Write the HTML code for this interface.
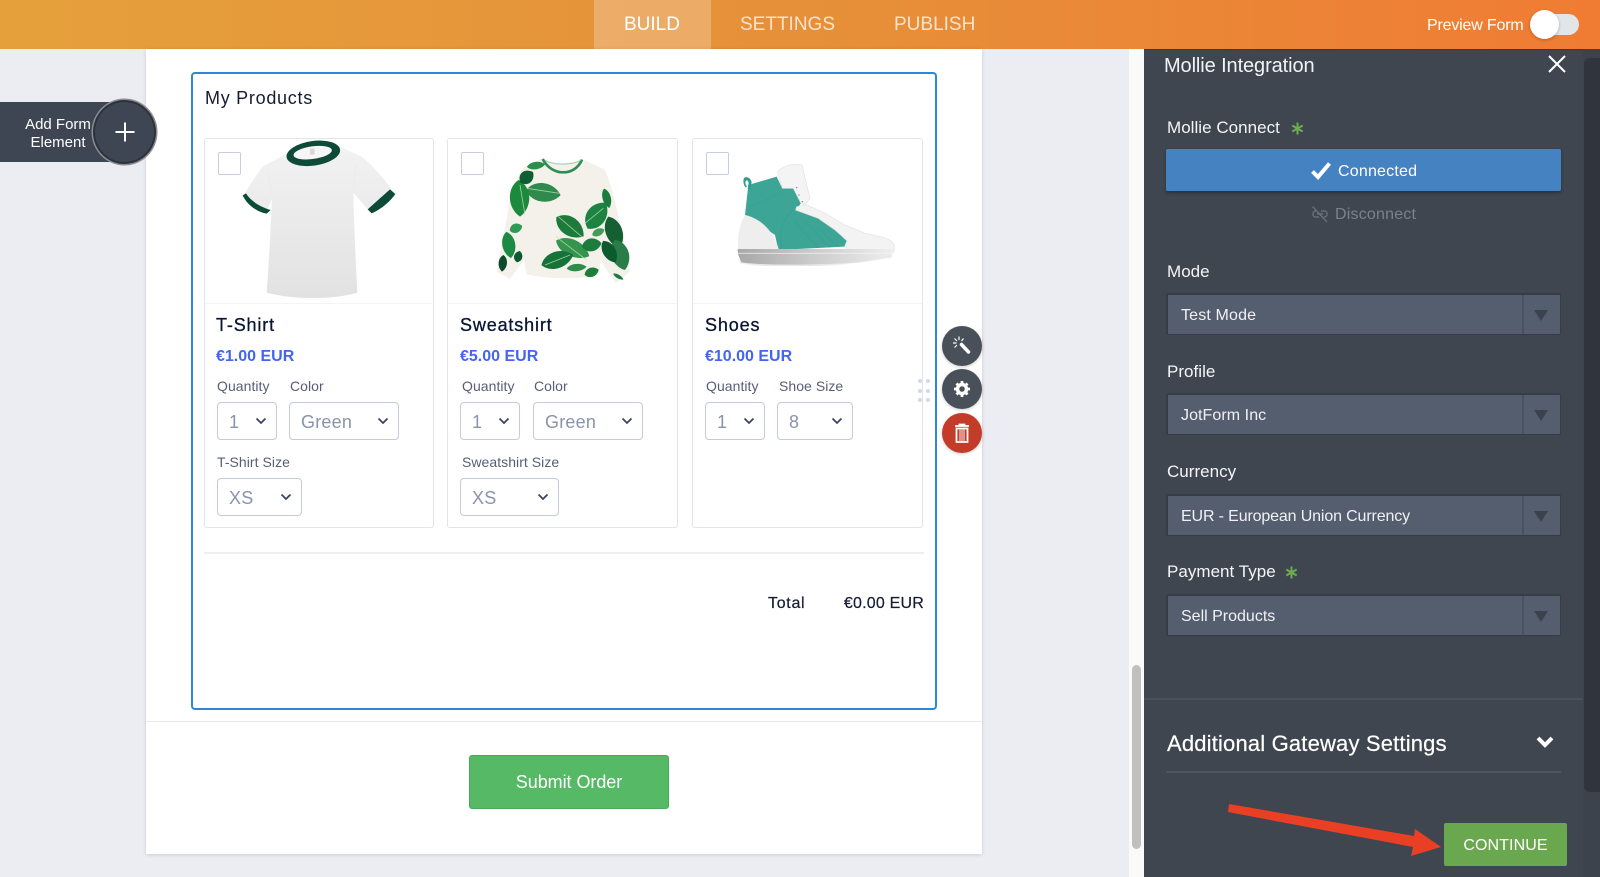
<!DOCTYPE html>
<html lang="en"><head><meta charset="utf-8"><title>Mollie Integration</title>
<style>
html,body{margin:0;padding:0}
body{width:1600px;height:877px;overflow:hidden;position:relative;background:#ecedf3;font-family:"Liberation Sans",sans-serif;color:#0a1533}
div,span{position:absolute;box-sizing:border-box}
.t{white-space:nowrap;line-height:20px}
.card{background:#fff;border:1px solid #e1e3ee;border-radius:3px;top:138px;height:390px}
.imgline{left:0;right:0;top:164px;height:1px;background:#f3f4f8}
.cb{width:23px;height:23px;top:152px;background:#fff;border:1px solid #c8cde0;border-radius:2px}
.title{font-size:18px;font-weight:400;top:315px;letter-spacing:.85px;-webkit-text-stroke:.3px #0a1533}
.price{font-size:16px;font-weight:700;color:#4465f0;top:347px;letter-spacing:0}
.lab{font-size:14px;color:#575f78;letter-spacing:.05px}
.sel{background:#fff;border:1px solid #c5cadc;border-radius:4px;height:38px;top:402px}
.sel b{position:absolute;font-weight:400;left:11px;top:9px;font-size:18px;line-height:20px;color:#8a93ab;letter-spacing:.2px}
.sel svg{position:absolute;top:14px;right:9px}
.pl{font-size:17px;color:#f4f5f7;left:1167px;letter-spacing:.03px}
.ds{left:1166px;width:395px;height:42px;background:#555e6e;border:2px solid #373d46;border-width:2px 1px 1px 2px;border-radius:2px}
.ds i{position:absolute;left:13px;top:11px;font-style:normal;font-size:16px;line-height:20px;color:#f0f1f4;white-space:nowrap}
.ds u{position:absolute;right:0;top:0;bottom:0;width:36px;border-left:2px solid #4a5260}
.ds u:after{content:"";position:absolute;left:10px;top:15px;border-left:7px solid transparent;border-right:7px solid transparent;border-top:11px solid #3b424d}
.fab{width:40px;height:40px;border-radius:50%;left:942px;box-shadow:0 1px 3px rgba(0,0,0,.2)}
</style></head><body>

<div style="left:0;top:0;width:1600px;height:49px;background:linear-gradient(90deg,#e5a03b 0%,#e69039 50%,#f07c34 100%)"></div>
<div style="left:594px;top:0;width:117px;height:49px;background:rgba(255,255,255,.24)"></div>
<div class="t" style="left:624px;top:15px;font-size:19px;color:#fff">BUILD</div>
<div class="t" style="left:740px;top:15px;font-size:19px;color:#fbe3cb">SETTINGS</div>
<div class="t" style="left:894px;top:15px;font-size:19px;color:#fbe3cb">PUBLISH</div>
<div class="t" style="left:1427px;top:16px;font-size:16px;color:#fff;letter-spacing:-.18px">Preview Form</div>
<div style="left:1534px;top:14px;width:45px;height:21px;border-radius:11px;background:#e3e6e8"></div>
<div style="left:1530px;top:10px;width:29px;height:29px;border-radius:50%;background:#fff;box-shadow:0 1px 3px rgba(0,0,0,.25)"></div>

<div style="left:146px;top:49px;width:836px;height:805px;background:#fff;box-shadow:0 1px 4px rgba(0,0,0,.14)"></div>
<div style="left:146px;top:721px;width:836px;height:1px;background:#e8e9ef"></div>
<div style="left:191px;top:72px;width:746px;height:638px;border:2px solid #2b88d8;border-radius:4px"></div>
<div class="t" style="left:205px;top:88px;font-size:18px;letter-spacing:.72px;color:#141c33">My Products</div>

<div class="card" style="left:204px;width:230px"><div class="imgline"></div></div>
<div class="card" style="left:447px;width:231px"><div class="imgline"></div></div>
<div class="card" style="left:692px;width:231px"><div class="imgline"></div></div>

<svg style="position:absolute;left:0;top:0" width="1600" height="877" viewBox="0 0 1600 877">
<defs>
<linearGradient id="ts" x1="0" y1="0" x2="0" y2="1"><stop offset="0" stop-color="#f2f2f2"/><stop offset="1" stop-color="#e2e2e2"/></linearGradient>
<linearGradient id="sole" x1="0" y1="0" x2="1" y2="0"><stop offset="0" stop-color="#a8a8a8"/><stop offset=".5" stop-color="#cdcdcd"/><stop offset="1" stop-color="#efefef"/></linearGradient>
<filter id="b"><feGaussianBlur stdDeviation=".45"/></filter>
<filter id="sh"><feGaussianBlur stdDeviation="1.5"/></filter>
<path id="lf" d="M-50 0C-30-38 25-38 50 0C25 36-30 36-50 0Z"/>
</defs>

<!-- t-shirt -->
<g transform="translate(230 136) scale(.3333)" filter="url(#b)">
<path d="M178 48L98 92C78 118 58 148 42 178L108 228L126 188C122 280 116 390 110 470C190 492 310 492 382 470C378 380 372 280 370 170L420 228L492 172C465 130 430 90 395 62L325 30Z" fill="url(#ts)"/>
<path d="M126 190C122 150 118 125 112 105M370 172C372 140 375 110 380 85" fill="none" stroke="#ececec" stroke-width="4"/>
<path d="M38 178L48 172C62 194 88 212 122 222L110 233C80 228 50 205 38 178Z" fill="#0f4b37"/>
<path d="M413 220L480 160L496 174C480 198 450 222 425 232Z" fill="#0f4b37"/>
<ellipse cx="250" cy="52" rx="81" ry="37" transform="rotate(-8 250 52)" fill="#0f4b37"/>
<ellipse cx="248" cy="50" rx="58" ry="19" transform="rotate(-8 248 50)" fill="#f6f6f6"/>
<rect x="240" y="38" width="14" height="18" fill="#d8d8d8"/>
</g>

<!-- sweatshirt -->
<g transform="translate(480 145) scale(.3333)" filter="url(#b)">
<path d="M185 42C220 60 280 58 305 42L372 72C390 100 405 170 420 230L450 380L408 414C395 395 375 370 362 345L358 388C300 405 200 402 140 388L132 345L90 402L50 380L82 210C90 150 105 100 130 68Z" fill="#f3f1ea"/>
<use href="#lf" transform="translate(190 143) rotate(8) scale(1.05 1)" fill="#2f8a4d"/>
<use href="#lf" transform="translate(118 160) rotate(88) scale(1.1 1.05)" fill="#1f8a3c"/>
<use href="#lf" transform="translate(140 97) rotate(-40) scale(.5 .7)" fill="#0f5f30"/>
<use href="#lf" transform="translate(168 62) rotate(-8) scale(.55 .4)" fill="#2b8f4b"/>
<use href="#lf" transform="translate(350 212) rotate(-55) scale(.95 1.05)" fill="#1f8340"/>
<use href="#lf" transform="translate(270 245) rotate(35) scale(1 1)" fill="#1a7a3a"/>
<use href="#lf" transform="translate(278 310) rotate(25) scale(1.1 .9)" fill="#34954f"/>
<use href="#lf" transform="translate(232 345) rotate(-18) scale(1 .9)" fill="#167337"/>
<use href="#lf" transform="translate(335 300) rotate(-10) scale(.6 .7)" fill="#1b7c3c"/>
<use href="#lf" transform="translate(290 368) rotate(-5) scale(.6 .4)" fill="#2d8c4a"/>
<use href="#lf" transform="translate(335 382) rotate(-20) scale(.45 .5)" fill="#1c7d3e"/>
<use href="#lf" transform="translate(355 262) rotate(-25) scale(.4 .4)" fill="#3f9c57"/>
<use href="#lf" transform="translate(402 262) rotate(70) scale(1 .9)" fill="#155f33"/>
<use href="#lf" transform="translate(420 330) rotate(72) scale(.95 .95)" fill="#2a7d48"/>
<use href="#lf" transform="translate(388 320) rotate(60) scale(.75 .7)" fill="#0f5a2e"/>
<use href="#lf" transform="translate(380 160) rotate(75) scale(.6 .45)" fill="#1e7b3d"/>
<use href="#lf" transform="translate(86 300) rotate(80) scale(.8 .7)" fill="#1f8a44"/>
<use href="#lf" transform="translate(108 250) rotate(-20) scale(.4 .5)" fill="#2f9a53"/>
<use href="#lf" transform="translate(68 355) rotate(95) scale(.5 .45)" fill="#0c4a2a"/>
<use href="#lf" transform="translate(115 335) rotate(-75) scale(.35 .45)" fill="#0e5a30"/>
<use href="#lf" transform="translate(415 395) rotate(30) scale(.35 .2)" fill="#1f7b40"/>
<g fill="none" stroke="#bfe0b8" stroke-width="2.5" opacity=".8"><path d="M140 130L238 145"/><path d="M120 120L135 210"/><path d="M315 235L370 190"/><path d="M235 215L305 275"/><path d="M228 275L320 345"/><path d="M195 360L270 330"/></g>
<path d="M188 42C215 95 285 95 306 44" fill="none" stroke="#2f8d54" stroke-width="8"/>
<path d="M195 46C220 62 280 60 302 46" fill="none" stroke="#9fcdb6" stroke-width="3"/>
</g>

<!-- shoe -->
<g transform="translate(725 155) scale(.3333)" filter="url(#b)">
<path d="M45 318C150 335 300 335 500 300" fill="none" stroke="#cfcfcf" stroke-width="14" opacity=".5" filter="url(#sh)"/>
<path d="M70 90L155 65L172 100L205 100L228 145L212 165L280 190L330 225L365 258L358 275L160 285L150 240L60 180Z" fill="#3ea596"/>
<path d="M158 50C170 35 205 22 232 30L240 70L255 130L240 150L228 145L205 100L172 100Z" fill="#f4f4f4" stroke="#e2e2e2" stroke-width="2"/>
<path d="M215 155L245 150L300 175L360 210L420 235C470 245 505 250 508 275L508 288L360 288L368 258L330 225L280 190L212 165Z" fill="#f3f3f3" stroke="#e2e2e2" stroke-width="2"/>
<path fill-rule="evenodd" d="M56 72C60 62 76 66 80 82L75 102L68 102L71 84C70 76 64 74 62 78C60 84 62 90 66 94L62 98C56 90 54 80 56 72Z" fill="#2f9c8d"/>
<path d="M60 180C105 190 145 225 162 285L40 285C36 250 42 210 60 180Z" fill="#eeeeee"/>
<path d="M72 155C110 145 140 125 168 112M205 162C172 195 160 235 170 280M205 195C230 225 255 250 280 280M240 200C265 225 290 250 315 278M275 215C295 235 315 255 340 275" fill="none" stroke="#2f8e80" stroke-width="2" opacity=".3"/>
<path d="M38 282H510C510 300 480 312 400 322C280 330 120 332 50 322C42 310 38 296 38 282Z" fill="url(#sole)"/>
<path d="M38 295H505" stroke="#f5f5f5" stroke-width="2.5" opacity=".8"/>
<g fill="#777"><circle cx="215" cy="98" r="2"/><circle cx="222" cy="120" r="2"/><circle cx="232" cy="140" r="2"/></g>
</g>

<!-- hr -->
<rect x="204" y="552" width="720" height="2" fill="#eeeff4"/>

<!-- drag dots -->
<g fill="#d5d8e4"><circle cx="920" cy="381" r="2"/><circle cx="928" cy="381" r="2"/><circle cx="920" cy="391" r="2"/><circle cx="928" cy="391" r="2"/><circle cx="920" cy="400" r="2"/><circle cx="928" cy="400" r="2"/></g>
</svg>

<div class="cb" style="left:218px"></div><div class="cb" style="left:461px"></div><div class="cb" style="left:706px"></div>

<div class="t title" style="left:216px">T-Shirt</div>
<div class="t title" style="left:460px">Sweatshirt</div>
<div class="t title" style="left:705px">Shoes</div>
<div class="t price" style="left:216px">€1.00 EUR</div>
<div class="t price" style="left:460px">€5.00 EUR</div>
<div class="t price" style="left:705px">€10.00 EUR</div>

<div class="t lab" style="left:217px;top:376px">Quantity</div>
<div class="t lab" style="left:290px;top:376px">Color</div>
<div class="t lab" style="left:217px;top:452px">T-Shirt Size</div>
<div class="t lab" style="left:462px;top:376px">Quantity</div>
<div class="t lab" style="left:534px;top:376px">Color</div>
<div class="t lab" style="left:462px;top:452px">Sweatshirt Size</div>
<div class="t lab" style="left:706px;top:376px">Quantity</div>
<div class="t lab" style="left:779px;top:376px">Shoe Size</div>

<div class="sel" style="left:217px;width:60px"><b>1</b><svg width="12" height="8" viewBox="0 0 12 8"><path d="M1.5 1.5L6 6L10.5 1.5" fill="none" stroke="#3a4561" stroke-width="1.8"/></svg></div>
<div class="sel" style="left:289px;width:110px"><b>Green</b><svg width="12" height="8" viewBox="0 0 12 8"><path d="M1.5 1.5L6 6L10.5 1.5" fill="none" stroke="#3a4561" stroke-width="1.8"/></svg></div>
<div class="sel" style="left:217px;width:85px;top:478px"><b>XS</b><svg width="12" height="8" viewBox="0 0 12 8"><path d="M1.5 1.5L6 6L10.5 1.5" fill="none" stroke="#3a4561" stroke-width="1.8"/></svg></div>
<div class="sel" style="left:460px;width:60px"><b>1</b><svg width="12" height="8" viewBox="0 0 12 8"><path d="M1.5 1.5L6 6L10.5 1.5" fill="none" stroke="#3a4561" stroke-width="1.8"/></svg></div>
<div class="sel" style="left:533px;width:110px"><b>Green</b><svg width="12" height="8" viewBox="0 0 12 8"><path d="M1.5 1.5L6 6L10.5 1.5" fill="none" stroke="#3a4561" stroke-width="1.8"/></svg></div>
<div class="sel" style="left:460px;width:99px;top:478px"><b>XS</b><svg width="12" height="8" viewBox="0 0 12 8"><path d="M1.5 1.5L6 6L10.5 1.5" fill="none" stroke="#3a4561" stroke-width="1.8"/></svg></div>
<div class="sel" style="left:705px;width:60px"><b>1</b><svg width="12" height="8" viewBox="0 0 12 8"><path d="M1.5 1.5L6 6L10.5 1.5" fill="none" stroke="#3a4561" stroke-width="1.8"/></svg></div>
<div class="sel" style="left:777px;width:76px"><b>8</b><svg width="12" height="8" viewBox="0 0 12 8"><path d="M1.5 1.5L6 6L10.5 1.5" fill="none" stroke="#3a4561" stroke-width="1.8"/></svg></div>

<div class="t" style="left:768px;top:594px;font-size:16px;letter-spacing:.7px;color:#141c33;-webkit-text-stroke:.2px #141c33">Total</div>
<div class="t" style="right:676px;top:594px;font-size:16px;letter-spacing:.2px;color:#141c33;-webkit-text-stroke:.2px #141c33">€0.00 EUR</div>

<div style="left:469px;top:755px;width:200px;height:54px;background:#55b966;border:1px solid #4aa95c;border-radius:3px;color:#fff;font-size:18px;letter-spacing:-.05px;line-height:52px;text-align:center">Submit Order</div>

<!-- add element -->
<div style="left:0;top:102px;width:130px;height:60px;background:#3e4553;border-radius:0 6px 6px 0"></div>
<div style="left:93px;top:100px;width:63px;height:64px;border-radius:50%;background:#3e4553;border:2px solid #2d333d;box-shadow:0 0 0 1.5px #8b8d92"></div>
<div class="t" style="left:0;width:116px;top:116px;font-size:15px;line-height:18px;color:#fff;text-align:center;white-space:normal">Add Form<br>Element</div>
<svg style="position:absolute;left:115px;top:122px" width="20" height="20" viewBox="0 0 20 20"><path d="M10 .5V19.5M.5 10H19.500" stroke="#fff" stroke-width="2"/></svg>

<!-- fabs -->
<div class="fab" style="top:326px;background:#495059"><svg style="position:absolute;left:9px;top:9px" width="22" height="22" viewBox="0 0 22 22"><path d="M10.500 9.500L17.500 17" stroke="#fff" stroke-width="3.500" stroke-linecap="round"/><path d="M8 1.500V5M2 8H5.500M3.500 3.500L6 6M12.500 3.500L10.500 6M3.500 12.500L6 10" stroke="#fff" stroke-width="1.200"/></svg></div>
<div class="fab" style="top:369px;background:#495059"><svg style="position:absolute;left:11px;top:11px" width="18" height="18" viewBox="0 0 18 18"><circle cx="9" cy="9" r="4.500" fill="none" stroke="#fff" stroke-width="3.500"/><path d="M9 1V4M9 14V17M1 9H4M14 9H17M3.500 3.500L5.500 5.500M12.500 12.500L14.500 14.500M14.500 3.500L12.500 5.500M5.500 12.500L3.500 14.500" stroke="#fff" stroke-width="2.800"/></svg></div>
<div class="fab" style="top:413px;background:#c33c2a"><svg style="position:absolute;left:12px;top:10px" width="16" height="20" viewBox="0 0 16 20"><path d="M1 3H15M5.500 3V1.500H10.500V3" fill="none" stroke="#fff" stroke-width="1.800"/><path d="M2.500 5.500H13.500V19H2.500Z" fill="none" stroke="#fff" stroke-width="1.800"/><path d="M6 6.500V18M8 6.500V18M10 6.500V18" stroke="#fff" stroke-width=".9"/></svg></div>

<!-- left strip + scrollbar -->
<div style="left:1129px;top:49px;width:15px;height:828px;background:#fafafa"></div>
<div style="left:1132px;top:665px;width:9px;height:184px;border-radius:5px;background:#c0c0c0"></div>

<!-- panel -->
<div style="left:1144px;top:49px;width:456px;height:828px;background:#3f4650"></div>
<div style="left:1144px;top:49px;width:456px;height:1px;background:#353b44"></div>
<div style="left:1583px;top:49px;width:17px;height:828px;background:#3c434d"></div>
<div style="left:1584px;top:58px;width:16px;height:734px;background:#30343c;border-radius:6px 0 0 6px"></div>
<div class="t" style="left:1164px;top:56px;font-size:20px;color:#f2f3f5;letter-spacing:-.1px">Mollie Integration</div>
<svg style="position:absolute;left:1547px;top:54px" width="20" height="20" viewBox="0 0 20 20"><path d="M2 2L18 18M18 2L2 18" stroke="#fff" stroke-width="2"/></svg>

<div class="t pl" style="top:118px">Mollie Connect</div>
<svg style="position:absolute;left:1291px;top:122px" width="13" height="13" viewBox="0 0 13 13"><path d="M6.500 .5V12.500M1.300 3.500L11.700 9.500M11.700 3.500L1.300 9.500" stroke="#6cad4f" stroke-width="2"/></svg>
<div style="left:1166px;top:149px;width:395px;height:42px;background:#4582c2;border-radius:2px;box-shadow:0 2px 3px rgba(0,0,0,.3)"></div>
<svg style="position:absolute;left:1310px;top:161px" width="22" height="19" viewBox="0 0 22 19"><path d="M2.500 10.500L8 16L19.500 2.500" fill="none" stroke="#fff" stroke-width="4"/></svg>
<div class="t" style="left:1338px;top:162px;font-size:16px;color:#fff;letter-spacing:.2px">Connected</div>
<svg style="position:absolute;left:1311px;top:205px" width="18" height="18" viewBox="0 0 18 18"><path d="M1.500 1.500L16 17" stroke="#70767e" stroke-width="1.200"/><path d="M5 6H4.500C1 6 1 12 4.500 12H8M10 6H13.500C17 6 17 12 13.500 12H13M6 9H12" fill="none" stroke="#70767e" stroke-width="1.200"/></svg>
<div class="t" style="left:1335px;top:205px;font-size:16px;color:#7b8189;letter-spacing:.2px">Disconnect</div>

<div class="t pl" style="top:262px">Mode</div>
<div class="ds" style="top:293px"><i style="letter-spacing:.15px">Test Mode</i><u></u></div>
<div class="t pl" style="top:362px">Profile</div>
<div class="ds" style="top:393px"><i style="letter-spacing:.07px">JotForm Inc</i><u></u></div>
<div class="t pl" style="top:462px">Currency</div>
<div class="ds" style="top:494px"><i style="letter-spacing:-.14px">EUR - European Union Currency</i><u></u></div>
<div class="t pl" style="top:562px">Payment Type</div>
<svg style="position:absolute;left:1285px;top:566px" width="13" height="13" viewBox="0 0 13 13"><path d="M6.500 .5V12.500M1.300 3.500L11.700 9.500M11.700 3.500L1.300 9.500" stroke="#6cad4f" stroke-width="2"/></svg>
<div class="ds" style="top:594px"><i>Sell Products</i><u></u></div>

<div style="left:1144px;top:698px;width:439px;height:2px;background:#4a515d"></div>
<div class="t" style="left:1167px;top:734px;font-size:22px;color:#fff;letter-spacing:.17px;-webkit-text-stroke:.2px #fff">Additional Gateway Settings</div>
<svg style="position:absolute;left:1536px;top:735px" width="18" height="14" viewBox="0 0 18 14"><path d="M2 3L9 10L16 3" fill="none" stroke="#fff" stroke-width="4"/></svg>
<div style="left:1166px;top:771px;width:395px;height:2px;background:#4d5563"></div>
<div style="left:1444px;top:823px;width:123px;height:43px;background:#6aa84f;border-radius:2px;color:#fff;font-size:16px;line-height:45px;text-align:center;letter-spacing:.1px">CONTINUE</div>

<!-- arrow -->
<svg style="position:absolute;left:0;top:0" width="1600" height="877" viewBox="0 0 1600 877"><path d="M1229 804L1414 836L1415 829L1441 847L1411 856L1413 847L1228 812Z" fill="#e93f24"/></svg>

</body></html>
